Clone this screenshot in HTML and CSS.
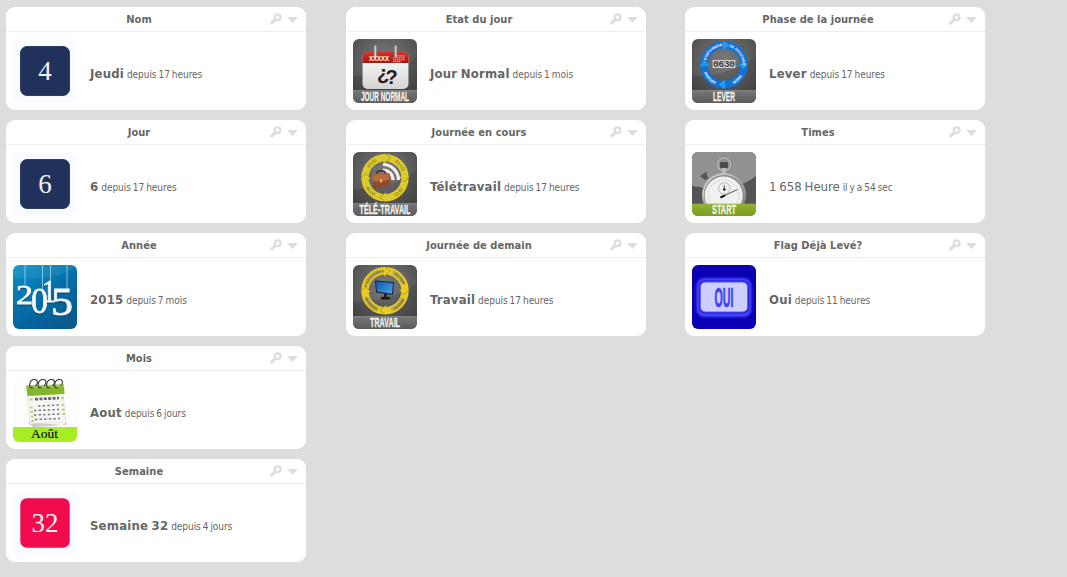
FILE: index.html
```
<!doctype html>
<html lang="fr">
<head>
<meta charset="utf-8">
<title>Calendrier</title>
<link rel="stylesheet" href="styles.css">
</head>

<body>
<svg class="defs">
	<defs>
		<radialGradient id="dark" cx="0.5" cy="0.35" r="0.7"><stop offset="0" stop-color="#7c7c7c"/><stop offset="1" stop-color="#484848"/></radialGradient>
		<linearGradient id="band" x2="0" y2="1"><stop offset="0" stop-color="#777"/><stop offset="1" stop-color="#5a5a5a"/></linearGradient>
		<linearGradient id="red" x2="0" y2="1"><stop offset="0" stop-color="#d8322a"/><stop offset="1" stop-color="#a8150f"/></linearGradient>
		<linearGradient id="paper" x2="0" y2="1"><stop offset="0" stop-color="#fff"/><stop offset="1" stop-color="#d4d4d4"/></linearGradient>
		<linearGradient id="sea" x2="0.6" y2="1"><stop offset="0" stop-color="#0794cb"/><stop offset="0.55" stop-color="#046ea8"/><stop offset="1" stop-color="#0a5a90"/></linearGradient>
		<linearGradient id="green" x2="0" y2="1"><stop offset="0" stop-color="#93b136"/><stop offset="1" stop-color="#7c9d1c"/></linearGradient>
		<linearGradient id="screen" x2="1" y2="1"><stop offset="0" stop-color="#1255a8"/><stop offset="1" stop-color="#48a8ee"/></linearGradient>
		<linearGradient id="silver" x2="1" y2="1"><stop offset="0" stop-color="#ddd"/><stop offset="1" stop-color="#777"/></linearGradient>
		<filter id="glow" x="-20%" y="-20%" width="140%" height="140%"><feGaussianBlur stdDeviation="1.3"/></filter>
		<path id="arcTL" d="M13.5 25.5A18.5 18.5 0 0 1 32 7.2"/>
		<path id="arcTR" d="M33 7.2A18.5 18.5 0 0 1 50.5 25.7"/>
		<path id="arcBL" d="M10.5 25.7A21.5 21.5 0 0 0 32 47.2"/>
		<symbol id="base" viewBox="0 0 64 64">
			<rect width="64" height="64" fill="url(#dark)"/>
			<path d="M0 37Q35 38 64 18V52H0Z" fill="#000" opacity=".12"/>
			<rect y="51.5" width="64" height="12.5" fill="url(#band)"/>
			<path d="M0 51.5H64" stroke="#999" stroke-width=".6"/>
		</symbol>
		<symbol id="ring" viewBox="0 0 64 64">
			<circle cx="32" cy="25.7" r="20" fill="none" stroke="currentColor" stroke-width="7.4"/>
			<path d="M31 1.2L38 6.2 31 11.5ZM56.4 24.7L51 30.5 46 24.7ZM33 50.2L26.5 45.5 33 40ZM7.4 27L12.500 20.800 18 27Z" fill="currentColor"/>
			<path d="M31.5 1.5L37.5 6.2 31.5 11M56 25L51 30 46.500 25M32.500 49.800L27 45.500 32.500 40.500M7.800 26.500L12.500 21.200 17.500 26.500" fill="none" stroke="#000" stroke-opacity=".3" stroke-width=".7"/>
		</symbol>
		<symbol id="loupe" viewBox="0 0 12 12">
			<circle cx="7.6" cy="4.3" r="2.9" fill="none" stroke="#ddd" stroke-width="2.2"/>
			<path d="M5 6.8L1.8 9.900" stroke="#ddd" stroke-width="3" stroke-linecap="round"/>
		</symbol>
		<symbol id="fleche" viewBox="0 0 11 6"><path d="M0 0H11L5.5 6Z" fill="#ddd"/></symbol>
	</defs>
</svg>

<div class="board">
	<div class="column">
		<div class="card">
			<div class="head"><h2>Nom</h2><svg class="loupe"><use href="#loupe"/></svg><svg class="fleche"><use href="#fleche"/></svg></div>
			<div class="body">
				<svg class="icon" viewBox="0 0 64 64">
					<rect width="64" height="64" fill="#fafbfe"/>
					<rect x="7.5" y="7.5" width="49" height="49" rx="6.5" fill="#20325b" stroke="#132754" stroke-width=".8"/>
					<text class="num" x="32" y="40.5">4</text>
				</svg>
				<p><b>Jeudi</b> <small>depuis 17 heures</small></p>
			</div>
		</div>
		<div class="card">
			<div class="head"><h2>Jour</h2><svg class="loupe"><use href="#loupe"/></svg><svg class="fleche"><use href="#fleche"/></svg></div>
			<div class="body">
				<svg class="icon" viewBox="0 0 64 64">
					<rect width="64" height="64" fill="#fafbfe"/>
					<rect x="7.5" y="7.5" width="49" height="49" rx="6.5" fill="#20325b" stroke="#132754" stroke-width=".8"/>
					<text class="num" x="32" y="40.5">6</text>
				</svg>
				<p><b>6</b> <small>depuis 17 heures</small></p>
			</div>
		</div>
		<div class="card">
			<div class="head"><h2>Année</h2><svg class="loupe"><use href="#loupe"/></svg><svg class="fleche"><use href="#fleche"/></svg></div>
			<div class="body">
				<svg class="icon" viewBox="0 0 64 64">
					<rect width="64" height="64" fill="url(#sea)"/>
					<path d="M0 0H64Q44 18 0 12Z" fill="#fff" opacity=".07"/>
					<path d="M12 0V20M29.5 0V26M37.5 0V17M54 0V24" stroke="#b5dcec" stroke-width=".7"/>
					<g class="year">
						<text x="3" y="38.5" font-size="28" textLength="17" lengthAdjust="spacingAndGlyphs">2</text>
						<text x="18" y="48" font-size="36" textLength="17" lengthAdjust="spacingAndGlyphs">0</text>
						<text x="29" y="36.5" font-size="31" textLength="14" lengthAdjust="spacingAndGlyphs">1</text>
						<text x="38" y="49.5" font-size="41" textLength="22" lengthAdjust="spacingAndGlyphs">5</text>
					</g>
				</svg>
				<p><b>2015</b> <small>depuis 7 mois</small></p>
			</div>
		</div>
		<div class="card">
			<div class="head"><h2>Mois</h2><svg class="loupe"><use href="#loupe"/></svg><svg class="fleche"><use href="#fleche"/></svg></div>
			<div class="body">
				<svg class="icon" viewBox="0 0 64 64">
					<rect width="64" height="64" fill="#fdfdfd"/>
					<path d="M14 44L49 47 55 44 52 47 20 49Z" fill="#ccc"/>
					<path d="M14 16L50 15 53 45Q34 44 17 46Z" fill="#f6f6f4" stroke="#ccc" stroke-width=".4"/>
					<path d="M13 7.5L51 6.5 51.5 16 14.5 18Z" fill="#85b52d"/>
					<path d="M13 7.5L51 6.5V9L13.5 10Z" fill="#a3cc4e"/>
					<path d="M22 21.3L46 20" stroke="#666" stroke-width="2.6" stroke-dasharray="3 1.4"/>
					<path d="M25 28L46 27M21 32.5L46 31.5M21 37L47 36M22 41.500L47 40.500" stroke="#777" stroke-width="1.5" stroke-dasharray="2.4 2.2"/>
					<path d="M16.500 21.600H19.500M17 29.500H19.500M17.500 34H20M18 38.500H20.500M18.500 43H21M48 20H51M48.500 27H51M49 31.500H51.500M49.500 36H52" stroke="#b3d86a" stroke-width="2"/>
					<g fill="none" stroke="#333" stroke-width="1.1">
						<path id="anneau" d="M20 9.500C14.500 11.500 16 1.500 21.500 1.500C25.500 1.500 25 6 22.500 8"/>
						<use href="#anneau" x="8.500"/><use href="#anneau" x="17"/><use href="#anneau" x="25"/>
					</g>
					<rect y="49" width="64" height="15" fill="#a5ed25"/>
					<text x="18" y="60" class="month" textLength="27" lengthAdjust="spacingAndGlyphs">Août</text>
				</svg>
				<p><b>Aout</b> <small>depuis 6 jours</small></p>
			</div>
		</div>
		<div class="card">
			<div class="head"><h2>Semaine</h2><svg class="loupe"><use href="#loupe"/></svg><svg class="fleche"><use href="#fleche"/></svg></div>
			<div class="body">
				<svg class="icon" viewBox="0 0 64 64">
					<rect width="64" height="64" fill="#fafbfe"/>
					<rect x="7.3" y="7.3" width="49.4" height="49.4" rx="6.5" fill="#f10b4c"/>
					<text class="num" x="32" y="40.5">32</text>
				</svg>
				<p><b>Semaine 32</b> <small>depuis 4 jours</small></p>
			</div>
		</div>
	</div>

	<div class="column">
		<div class="card">
			<div class="head"><h2>Etat du jour</h2><svg class="loupe"><use href="#loupe"/></svg><svg class="fleche"><use href="#fleche"/></svg></div>
			<div class="body">
				<svg class="icon" viewBox="0 0 64 64">
					<use href="#base"/>
					<rect x="9" y="14" width="47" height="37" rx="5" fill="#333" opacity=".5"/>
					<rect x="9.5" y="13" width="46" height="37" rx="5" fill="url(#paper)"/>
					<path d="M9.5 24V18Q9.5 13 14.5 13H50.5Q55.5 13 55.5 18V24Z" fill="url(#red)"/>
					<path d="M22.3 7.5V17M42.7 7.5V17" stroke="#777" stroke-width="3.4" stroke-linecap="round"/>
					<path d="M22.3 7.5V17M42.7 7.5V17" stroke="#ccc" stroke-width="1.8" stroke-linecap="round"/>
					<text x="16" y="22.3" class="cal" textLength="20" lengthAdjust="spacingAndGlyphs">XXXXX</text>
					<path d="M43 16.800H52M40 18.800H52M40 20.800H52M40 22.600H48" stroke="#e99c96" stroke-width="1.300" stroke-dasharray="1.500 .500"/>
					<text class="quoi"><tspan x="24" y="41">¿</tspan><tspan x="32.5" y="44.5">?</tspan></text>
					<text x="8" y="62" class="label" textLength="48" lengthAdjust="spacingAndGlyphs">JOUR NORMAL</text>
				</svg>
				<p><b>Jour Normal</b> <small>depuis 1 mois</small></p>
			</div>
		</div>
		<div class="card">
			<div class="head"><h2>Journée en cours</h2><svg class="loupe"><use href="#loupe"/></svg><svg class="fleche"><use href="#fleche"/></svg></div>
			<div class="body">
				<svg class="icon" viewBox="0 0 64 64">
					<use href="#base"/>
					<use href="#ring" color="#dcc92e"/>
					<g class="around" fill="#8a7d25">
						<text><textPath href="#arcTL" startOffset="10">CLIC</textPath></text>
						<text><textPath href="#arcTR" startOffset="9">ALLO</textPath></text>
						<text transform="rotate(-90 32 25.700)"><textPath href="#arcBL" startOffset="11">CLIC</textPath></text>
						<text><textPath href="#arcBL" startOffset="10">ALLO</textPath></text>
					</g>
					<g fill="none" stroke="#f4efe8" stroke-width="3.2">
						<path d="M30 12.5A15.5 15.5 0 0 1 45.5 28M30 18A10 10 0 0 1 40 28"/>
					</g>
					<path d="M24 22V20.5Q24 19 26 19H30Q32 19 32 20.5V22" fill="none" stroke="#51240f" stroke-width="1.3"/>
					<path d="M19.5 22.5L36 21.5Q37 21.5 37 22.5L37.5 33 22 36.5Q20.5 36.5 20.3 35Z" fill="#944a27"/>
					<path d="M19.5 22.5L36 21.5 37 27Q28 31 20 29Z" fill="#b66b3e"/>
					<path d="M28 27V30.5" stroke="#e7c889" stroke-width="1.5"/>
					<text x="6.5" y="62" class="label" textLength="51" lengthAdjust="spacingAndGlyphs">TÉLÉ-TRAVAIL</text>
				</svg>
				<p><b>Télétravail</b> <small>depuis 17 heures</small></p>
			</div>
		</div>
		<div class="card">
			<div class="head"><h2>Journée de demain</h2><svg class="loupe"><use href="#loupe"/></svg><svg class="fleche"><use href="#fleche"/></svg></div>
			<div class="body">
				<svg class="icon" viewBox="0 0 64 64">
					<use href="#base"/>
					<use href="#ring" color="#e9cb22"/>
					<path d="M14 18A20 20 0 0 1 26 6.500M39 7A20 20 0 0 1 50 18M50 33A20 20 0 0 1 38 45M25 45A20 20 0 0 1 14 33" fill="none" stroke="#c6b14a" stroke-width="4.500"/>
					<g class="around tiny" fill="#6d6430">
						<text><textPath href="#arcTL" startOffset="3">PROGRAMMER</textPath></text>
						<text><textPath href="#arcTR" startOffset="8">REUNIR</textPath></text>
						<text><textPath href="#arcBL" startOffset="7">REPARER</textPath></text>
						<text transform="rotate(-90 32 25.700)"><textPath href="#arcBL" startOffset="9">VENDRE</textPath></text>
					</g>
					<ellipse cx="32.5" cy="33" rx="5" ry="1.5" fill="#181818"/>
					<path d="M31 28H34V33H31Z" fill="#222"/>
					<path d="M22 15.5L41 17 40 30 23 27.5Z" fill="#172231"/>
					<path d="M23 16.5L40 18 39 28.7 24 26.5Z" fill="url(#screen)"/>
					<text x="17" y="62" class="label" textLength="30" lengthAdjust="spacingAndGlyphs">TRAVAIL</text>
				</svg>
				<p><b>Travail</b> <small>depuis 17 heures</small></p>
			</div>
		</div>
	</div>

	<div class="column">
		<div class="card">
			<div class="head"><h2>Phase de la journée</h2><svg class="loupe"><use href="#loupe"/></svg><svg class="fleche"><use href="#fleche"/></svg></div>
			<div class="body">
				<svg class="icon" viewBox="0 0 64 64">
					<use href="#base"/>
					<use href="#ring" color="#1271d6"/>
					<path d="M31 1.200L38 6.200 31 11.500ZM56.400 24.700L51 30.500 46 24.700ZM33 50.200L26.500 45.500 33 40ZM7.400 27L12.500 20.800 18 27Z" fill="#219af5"/>
					<g class="around tiny" fill="#fff">
						<text><textPath href="#arcTL" startOffset="4">S'INFORMER</textPath></text>
						<text><textPath href="#arcTR" startOffset="4">SE DOUCHER</textPath></text>
						<text><textPath href="#arcBL" startOffset="8">MANGER</textPath></text>
						<text transform="rotate(-90 32 25.700)"><textPath href="#arcBL" startOffset="10">BOIRE</textPath></text>
					</g>
					<path d="M20.700 25H43.300" stroke="#ddd" stroke-width="8" stroke-dasharray="5.200 .600"/>
					<text x="21" y="28.400" class="clock" textLength="22" lengthAdjust="spacingAndGlyphs">0630</text>
					<text x="21" y="62" class="label" textLength="22" lengthAdjust="spacingAndGlyphs">LEVER</text>
				</svg>
				<p><b>Lever</b> <small>depuis 17 heures</small></p>
			</div>
		</div>
		<div class="card">
			<div class="head"><h2>Times</h2><svg class="loupe"><use href="#loupe"/></svg><svg class="fleche"><use href="#fleche"/></svg></div>
			<div class="body">
				<svg class="icon" viewBox="0 0 64 64">
					<rect width="64" height="64" fill="#555"/>
					<path d="M0 0H64V24Q42 42 0 34Z" fill="#929292"/>
					<circle cx="32" cy="12.5" r="6.8" fill="none" stroke="#b5b5b5" stroke-width="1.8"/>
					<circle cx="32" cy="12.5" r="7.9" fill="none" stroke="#777" stroke-width=".5"/>
					<rect x="28" y="10" width="8" height="6" rx="1" fill="#4c4c4c"/>
					<path d="M30 16H34V23H30Z" fill="#bbb"/>
					<path d="M8 24L15 19.5 14.5 23 17 26 13 28Z" fill="#555"/>
					<circle cx="32" cy="43" r="22" fill="url(#silver)"/>
					<circle cx="32" cy="43" r="20" fill="#888"/>
					<circle cx="31.7" cy="43.5" r="19" fill="#f0f0f0"/>
					<circle cx="31.7" cy="43.5" r="15.5" fill="none" stroke="#aaa" stroke-width="1.2" stroke-dasharray=".6 2.64"/>
					<circle cx="32.3" cy="36.5" r="5.8" fill="#eee" stroke="#aaa" stroke-width=".8"/>
					<path d="M32.3 33V38" stroke="#333" stroke-width=".8"/>
					<circle cx="32.3" cy="37.5" r="1.3" fill="#222"/>
					<path d="M28.5 45.5L45.5 37.5" stroke="#444" stroke-width=".9"/>
					<path d="M28.5 45.5L33 43.4" stroke="#111" stroke-width="2"/>
					<rect y="51.7" width="64" height="12.3" fill="url(#green)"/>
					<text x="20" y="62" class="label" textLength="24" lengthAdjust="spacingAndGlyphs">START</text>
				</svg>
				<p>1 658 Heure <small>il y a 54 sec</small></p>
			</div>
		</div>
		<div class="card">
			<div class="head"><h2>Flag Déjà Levé?</h2><svg class="loupe"><use href="#loupe"/></svg><svg class="fleche"><use href="#fleche"/></svg></div>
			<div class="body">
				<svg class="icon" viewBox="0 0 64 64">
					<rect width="64" height="64" fill="#0b00b3"/>
					<rect x="4.5" y="13" width="55" height="39" rx="8" fill="#4545ff" filter="url(#glow)"/>
					<rect x="7" y="15.5" width="50" height="33" rx="6" fill="#1c16d0"/>
					<rect x="8.3" y="17" width="47.4" height="30" rx="5" fill="#cdcdff" stroke="#5a5aff" stroke-width="1"/>
					<text x="22.5" y="42" class="oui" textLength="19" lengthAdjust="spacingAndGlyphs">OUI</text>
				</svg>
				<p><b>Oui</b> <small>depuis 11 heures</small></p>
			</div>
		</div>
	</div>
</div>
</body>
</html>
```
FILE: styles.css
```
*{ margin:0; padding:0; box-sizing:border-box;}
body{ background:#ddd; color:#666; font-family:Tahoma,"DejaVu Sans Condensed","DejaVu Sans",sans-serif; font-stretch:condensed;}
.defs{ display:block; width:0; height:0;}

.board{ display:grid; grid-template-columns:340px 339px 300px; padding:7px 6px;}
.column{ display:flex; flex-direction:column; gap:10px;}
.card{ width:300px; height:103px; background:#fff; border-radius:9px;}

.head{ display:flex; align-items:center; height:25px; padding-right:8px; border-bottom:1px solid #eee;}
.head h2{ width:266px; flex:none; margin-right:-2px; padding-top:2px; font-size:11px; line-height:24px; letter-spacing:.05px; text-align:center; color:#666;}
.loupe{ width:12px; height:12px; flex:none;}
.fleche{ width:11px; height:6px; flex:none; margin:1px 0 0 5px;}

.body{ display:flex; align-items:center; gap:13px; padding:7px;}
.body p{ font-size:13px; line-height:18px; padding-top:7px; word-spacing:-.8px; white-space:nowrap;}
.body b{ letter-spacing:.2px;}
.body small{ font-size:10px; letter-spacing:-.05px;}
.icon{ width:64px; height:64px; flex:none; border-radius:6px; overflow:hidden;}

.num{ font:27px "Liberation Serif",serif; fill:#f2f2f4; text-anchor:middle;}
.year{ font-family:"Liberation Serif",serif; fill:#f4f6f8; stroke:#f4f6f8; stroke-width:.8px; filter:drop-shadow(.8px 1px .5px #03466f);}
.month{ font:13px "Liberation Serif",serif; fill:#111; stroke:#111; stroke-width:.2px;}
.label{ font:bold 13px "Liberation Sans",sans-serif; fill:#f4f4f4; stroke:#f4f4f4; stroke-width:.3px;}
.cal{ font:bold 8px "Liberation Sans",sans-serif; fill:#fff;}
.quoi{ font:bold 20px "Liberation Sans Narrow","Liberation Sans",sans-serif; fill:#2c1c16;}
.around{ font:bold 4.5px "Liberation Sans",sans-serif;}
.tiny{ font-size:3.7px;}
.clock{ font:bold 9px "Liberation Mono",monospace; fill:#333;}
.oui{ font:bold 28px "Liberation Sans",sans-serif; fill:#4040f2; stroke:#4040f2; stroke-width:.6px;}
```
